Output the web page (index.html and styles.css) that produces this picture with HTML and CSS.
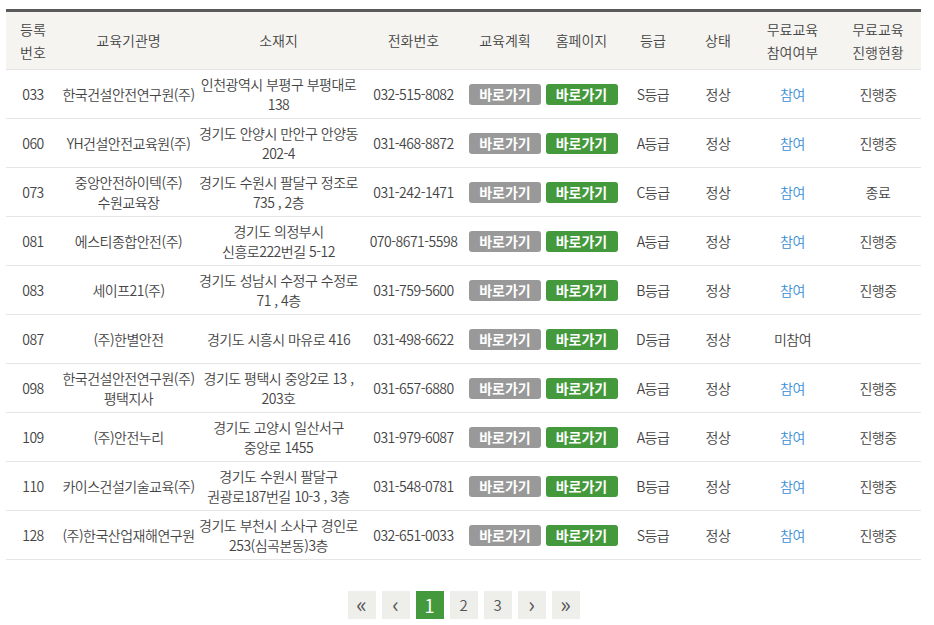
FILE: index.html
```html
<!DOCTYPE html>
<html lang="ko">
<head>
<meta charset="utf-8">
<title>교육기관 목록</title>
<link rel="stylesheet" href="styles.css">
</head>
<body>
<div class="wrap">
<table class="list">
  <colgroup>
    <col class="c1"><col class="c2"><col class="c3"><col class="c4"><col class="c5">
    <col class="c6"><col class="c7"><col class="c8"><col class="c9"><col class="c10">
  </colgroup>
  <thead>
    <tr>
      <th>등록<br>번호</th><th>교육기관명</th><th>소재지</th><th>전화번호</th><th>교육계획</th>
      <th>홈페이지</th><th>등급</th><th>상태</th><th>무료교육<br>참여여부</th><th>무료교육<br>진행현황</th>
    </tr>
  </thead>
  <tbody>
    <tr><td>033</td><td>한국건설안전연구원(주)</td><td>인천광역시 부평구 부평대로 138</td><td>032-515-8082</td><td><a class="btn gray">바로가기</a></td><td><a class="btn green">바로가기</a></td><td>S등급</td><td>정상</td><td class="join">참여</td><td>진행중</td></tr>
    <tr><td>060</td><td>YH건설안전교육원(주)</td><td>경기도 안양시 만안구 안양동 202-4</td><td>031-468-8872</td><td><a class="btn gray">바로가기</a></td><td><a class="btn green">바로가기</a></td><td>A등급</td><td>정상</td><td class="join">참여</td><td>진행중</td></tr>
    <tr><td>073</td><td>중앙안전하이텍(주) 수원교육장</td><td>경기도 수원시 팔달구 정조로 735 , 2층</td><td>031-242-1471</td><td><a class="btn gray">바로가기</a></td><td><a class="btn green">바로가기</a></td><td>C등급</td><td>정상</td><td class="join">참여</td><td>종료</td></tr>
    <tr><td>081</td><td>에스티종합안전(주)</td><td>경기도 의정부시 신흥로222번길 5-12</td><td>070-8671-5598</td><td><a class="btn gray">바로가기</a></td><td><a class="btn green">바로가기</a></td><td>A등급</td><td>정상</td><td class="join">참여</td><td>진행중</td></tr>
    <tr><td>083</td><td>세이프21(주)</td><td>경기도 성남시 수정구 수정로 71 , 4층</td><td>031-759-5600</td><td><a class="btn gray">바로가기</a></td><td><a class="btn green">바로가기</a></td><td>B등급</td><td>정상</td><td class="join">참여</td><td>진행중</td></tr>
    <tr><td>087</td><td>(주)한별안전</td><td>경기도 시흥시 마유로 416</td><td>031-498-6622</td><td><a class="btn gray">바로가기</a></td><td><a class="btn green">바로가기</a></td><td>D등급</td><td>정상</td><td>미참여</td><td></td></tr>
    <tr><td>098</td><td>한국건설안전연구원(주) 평택지사</td><td>경기도 평택시 중앙2로 13 , 203호</td><td>031-657-6880</td><td><a class="btn gray">바로가기</a></td><td><a class="btn green">바로가기</a></td><td>A등급</td><td>정상</td><td class="join">참여</td><td>진행중</td></tr>
    <tr><td>109</td><td>(주)안전누리</td><td>경기도 고양시 일산서구 중앙로 1455</td><td>031-979-6087</td><td><a class="btn gray">바로가기</a></td><td><a class="btn green">바로가기</a></td><td>A등급</td><td>정상</td><td class="join">참여</td><td>진행중</td></tr>
    <tr><td>110</td><td>카이스건설기술교육(주)</td><td>경기도 수원시 팔달구 권광로187번길 10-3 , 3층</td><td>031-548-0781</td><td><a class="btn gray">바로가기</a></td><td><a class="btn green">바로가기</a></td><td>B등급</td><td>정상</td><td class="join">참여</td><td>진행중</td></tr>
    <tr><td>128</td><td>(주)한국산업재해연구원</td><td>경기도 부천시 소사구 경인로 253(심곡본동)3층</td><td>032-651-0033</td><td><a class="btn gray">바로가기</a></td><td><a class="btn green">바로가기</a></td><td>S등급</td><td>정상</td><td class="join">참여</td><td>진행중</td></tr>
  </tbody>
</table>
<nav class="paging">
  <a class="pg arrow">&laquo;</a>
  <a class="pg arrow">&lsaquo;</a>
  <a class="pg on">1</a>
  <a class="pg">2</a>
  <a class="pg">3</a>
  <a class="pg arrow">&rsaquo;</a>
  <a class="pg arrow">&raquo;</a>
</nav>
</div>
</body>
</html>
```
FILE: styles.css
```css
html, body {
  margin: 0;
  padding: 0;
  background: #fff;
}
body {
  font-family: "Noto Sans CJK KR", "Noto Sans", sans-serif;
  font-size: 14px;
  font-weight: 350;
  letter-spacing: -0.5px;
  color: #444;
}
.wrap {
  width: 915px;
  padding: 9px 0 0 6px;
}
.list {
  width: 915px;
  border-collapse: collapse;
  table-layout: fixed;
  border-top: 3px solid #5a5a5a;
}
.c1 { width: 54px; }
.c2 { width: 137px; }
.c3 { width: 163px; }
.c4 { width: 107px; }
.c5 { width: 76px; }
.c6 { width: 77px; }
.c7 { width: 66px; }
.c8 { width: 64px; }
.c9 { width: 85px; }
.c10 { width: 86px; }
.list th {
  background: #f5f4f0;
  font-weight: 350;
  height: 57px;
  padding: 0 2px;
  line-height: 23px;
  letter-spacing: 0;
  color: #444;
  border-bottom: 1px solid #e4e4e4;
}
.list td {
  height: 48px;
  padding: 0 2px;
  text-align: center;
  line-height: 20px;
  border-bottom: 1px solid #e6e6e6;
  word-break: keep-all;
}
.btn {
  display: inline-block;
  width: 72px;
  height: 21px;
  line-height: 21px;
  border-radius: 3px;
  color: #fff;
  font-weight: 700;
  font-size: 14px;
  letter-spacing: 0;
  vertical-align: middle;
}
.gray { background: #999; }
.green { background: #44993c; }
.join { color: #3b8fd6; }
.paging {
  display: flex;
  justify-content: center;
  gap: 6px;
  margin-top: 31px;
}
.pg {
  display: block;
  width: 28px;
  height: 28px;
  line-height: 28px;
  text-align: center;
  background: #eeeeeb;
  color: #555;
  font-size: 15px;
  letter-spacing: 0;
}
.pg.arrow {
  font-size: 22px;
  font-weight: 400;
  line-height: 25px;
}
.pg.on {
  background: #44993c;
  color: #fff;
  font-size: 18px;
  font-weight: 400;
}
```
